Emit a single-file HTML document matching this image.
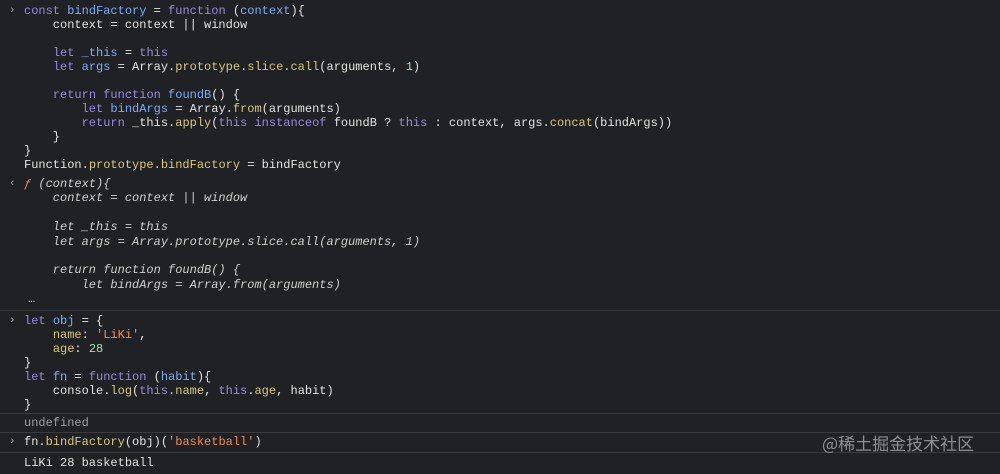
<!DOCTYPE html>
<html><head><meta charset="utf-8"><style>
html,body{margin:0;padding:0;background:#202124;width:1000px;height:474px;overflow:hidden}
body{position:relative;font-family:"Liberation Mono",monospace;font-size:12px;color:#e3e3e3}
.l{position:absolute;left:24px;white-space:pre;line-height:14px;height:14px}
.p{position:absolute;left:9px;color:#9aa0a6;font-size:11px;line-height:14px}
.k{color:#9a8ae0}.v{color:#7cacf8}.y{color:#d9c97c}.s{color:#f28b54}.n{color:#a1e0b8}
.o{color:#cfcfcf;font-style:italic}.f{color:#f28b54;font-style:italic}
.sep{position:absolute;left:0;width:1000px;height:1px;background:#3a3b3e}
.wm{position:absolute;left:822px;top:433px;color:#8e8f92;font-family:"Noto Sans CJK SC",sans-serif;font-size:17px;line-height:20px}
</style></head><body>
<div class="p" style="top:4px">›</div>
<div class="l" style="top:4px"><span class="k">const</span> <span class="v">bindFactory</span> = <span class="k">function</span> (<span class="v">context</span>){</div>
<div class="l" style="top:18px">    context = context || window</div>
<div class="l" style="top:46px">    <span class="k">let</span> <span class="v">_this</span> = <span class="k">this</span></div>
<div class="l" style="top:60px">    <span class="k">let</span> <span class="v">args</span> = Array.<span class="y">prototype</span>.<span class="y">slice</span>.<span class="y">call</span>(arguments, <span class="n">1</span>)</div>
<div class="l" style="top:88px">    <span class="k">return</span> <span class="k">function</span> <span class="v">foundB</span>() {</div>
<div class="l" style="top:102px">        <span class="k">let</span> <span class="v">bindArgs</span> = Array.<span class="y">from</span>(arguments)</div>
<div class="l" style="top:116px">        <span class="k">return</span> _this.<span class="y">apply</span>(<span class="k">this</span> <span class="k">instanceof</span> foundB ? <span class="k">this</span> : context, args.<span class="y">concat</span>(bindArgs))</div>
<div class="l" style="top:130px">    }</div>
<div class="l" style="top:144px">}</div>
<div class="l" style="top:158px">Function.<span class="y">prototype</span>.<span class="y">bindFactory</span> = bindFactory</div>
<div class="p" style="top:177px">‹</div>
<div class="l o" style="top:177px"><span class="f">ƒ</span> (context){</div>
<div class="l o" style="top:191px">    context = context || window</div>
<div class="l o" style="top:220px">    let _this = this</div>
<div class="l o" style="top:235px">    let args = Array.prototype.slice.call(arguments, 1)</div>
<div class="l o" style="top:263px">    return function foundB() {</div>
<div class="l o" style="top:278px">        let bindArgs = Array.from(arguments)</div>
<div class="l" style="top:292px;left:28px;color:#bbb">…</div>
<div class="sep" style="top:310px"></div>
<div class="p" style="top:314px">›</div>
<div class="l" style="top:314px"><span class="k">let</span> <span class="v">obj</span> = {</div>
<div class="l" style="top:328px">    <span class="y">name</span>: <span class="s">'LiKi'</span>,</div>
<div class="l" style="top:342px">    <span class="y">age</span>: <span class="n">28</span></div>
<div class="l" style="top:356px">}</div>
<div class="l" style="top:370px"><span class="k">let</span> <span class="v">fn</span> = <span class="k">function</span> (<span class="v">habit</span>){</div>
<div class="l" style="top:384px">    console.<span class="y">log</span>(<span class="k">this</span>.<span class="y">name</span>, <span class="k">this</span>.<span class="y">age</span>, habit)</div>
<div class="l" style="top:398px">}</div>
<div class="sep" style="top:413px"></div>
<div class="l" style="top:416px;color:#9aa0a6">undefined</div>
<div class="sep" style="top:432px"></div>
<div class="p" style="top:435px">›</div>
<div class="l" style="top:435px">fn.<span class="y">bindFactory</span>(obj)(<span class="s">'basketball'</span>)</div>
<div class="sep" style="top:452px"></div>
<div class="l" style="top:456px">LiKi 28 basketball</div>
<div class="wm">@稀土掘金技术社区</div>
</body></html>
